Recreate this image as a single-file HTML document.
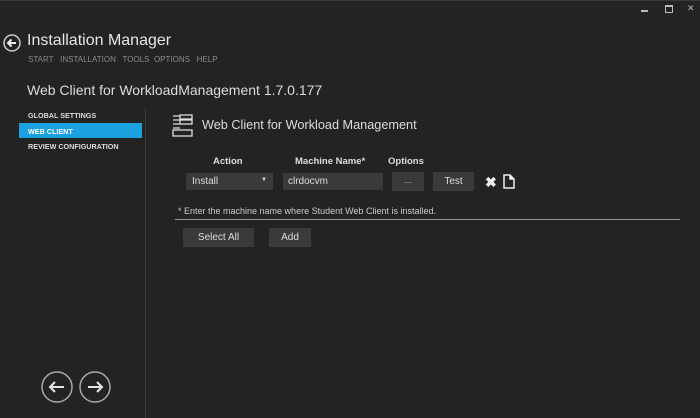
<!DOCTYPE html>
<html><head><style>
body{margin:0;width:700px;height:418px;background:#232323;font-family:"Liberation Sans",sans-serif;color:#ddd;position:relative;overflow:hidden}
.a{position:absolute;white-space:nowrap}
.btn{position:absolute;background:#3a3a3a;color:#ddd;font-size:10px;text-align:center}
</style></head><body>
<div class="a" style="left:0;top:0;width:700px;height:1px;background:#3a3a3a"></div>
<div class="a" style="left:641px;top:10px;width:7px;height:2px;background:#bbb"></div>
<div class="a" style="left:665px;top:5px;width:6px;height:5px;border:1px solid #bbb;border-top-width:2px"></div>
<div class="a" style="left:687px;top:3px;font-size:9px;color:#bbb">✕</div>
<svg class="a" style="left:3px;top:34px" width="18" height="18"><circle cx="9" cy="9" r="8" fill="none" stroke="#ccc" stroke-width="1.5"/><path d="M13 9H5M8.5 5.5L5 9l3.5 3.5" fill="none" stroke="#eee" stroke-width="2"/></svg>
<div class="a" style="left:27px;top:32px;font-size:16px;color:#e6e6e6">Installation Manager</div>
<div class="a" style="left:28px;top:55px;font-size:8px;color:#8a8a8a">START&nbsp;&nbsp;&nbsp;INSTALLATION&nbsp;&nbsp;&nbsp;TOOLS&nbsp;&nbsp;OPTIONS&nbsp;&nbsp;&nbsp;HELP</div>
<div class="a" style="left:27px;top:82px;font-size:14px;color:#dcdcdc">Web Client for WorkloadManagement 1.7.0.177</div>
<div class="a" style="left:145px;top:108px;width:1px;height:310px;background:#3b3b3b"></div>
<div class="a" style="left:28px;top:111px;font-size:7.2px;color:#ddd;font-weight:bold">GLOBAL SETTINGS</div>
<div class="a" style="left:19px;top:123px;width:123px;height:15px;background:#1ba1e2"></div>
<div class="a" style="left:28px;top:127px;font-size:7.2px;color:#fff;font-weight:bold">WEB CLIENT</div>
<div class="a" style="left:28px;top:142px;font-size:7.2px;color:#ddd;font-weight:bold">REVIEW CONFIGURATION</div>
<svg class="a" style="left:172px;top:114px" width="22" height="24" fill="none" stroke="#ddd" stroke-width="1.3"><path d="M1 2h7M1 6h7M1 10h7M1 14h7"/><rect x="8" y="1" width="12" height="4"/><rect x="8" y="6" width="12" height="4"/><rect x="1" y="16" width="19" height="6"/></svg>
<div class="a" style="left:202px;top:118px;font-size:12.7px;color:#ddd">Web Client for Workload Management</div>
<div class="a" style="left:213px;top:156px;font-size:9.5px;font-weight:bold">Action</div>
<div class="a" style="left:295px;top:156px;font-size:9.5px;font-weight:bold">Machine Name*</div>
<div class="a" style="left:388px;top:156px;font-size:9.5px;font-weight:bold">Options</div>
<div class="btn" style="left:186px;top:173px;width:87px;height:17px;text-align:left"><span class="a" style="left:6px;top:3px">Install</span><span class="a" style="left:75px;top:4px;font-size:6px">▼</span></div>
<div class="btn" style="left:283px;top:173px;width:100px;height:17px;text-align:left"><span class="a" style="left:5px;top:3px">clrdocvm</span></div>
<div class="btn" style="left:392px;top:172px;width:32px;height:19px;line-height:17px;font-size:8px">...</div>
<div class="btn" style="left:433px;top:172px;width:41px;height:19px;line-height:19px">Test</div>
<div class="a" style="left:485px;top:174px;font-size:14px;font-weight:bold;color:#eee">✖</div>
<svg class="a" style="left:503px;top:174px" width="12" height="15" fill="none" stroke="#eee" stroke-width="1.5"><path d="M1 1h6l4 4v9H1z"/><path d="M7 1v4h4" fill="#eee"/></svg>
<div class="a" style="left:178px;top:206px;font-size:9px;color:#ccc">* Enter the machine name where Student Web Client is installed.</div>
<div class="a" style="left:175px;top:219px;width:505px;height:1px;background:#9a9a9a"></div>
<div class="btn" style="left:183px;top:228px;width:71px;height:19px;line-height:19px">Select All</div>
<div class="btn" style="left:269px;top:228px;width:42px;height:19px;line-height:19px">Add</div>
<svg class="a" style="left:40px;top:370px" width="72" height="34" fill="none" stroke="#aaa" stroke-width="1.5"><circle cx="17" cy="17" r="15"/><circle cx="55" cy="17" r="15"/><path d="M24 17H10M15 12l-5 5 5 5M48 17h14M57 12l5 5-5 5" stroke="#e6e6e6" stroke-width="2"/></svg>
</body></html>
